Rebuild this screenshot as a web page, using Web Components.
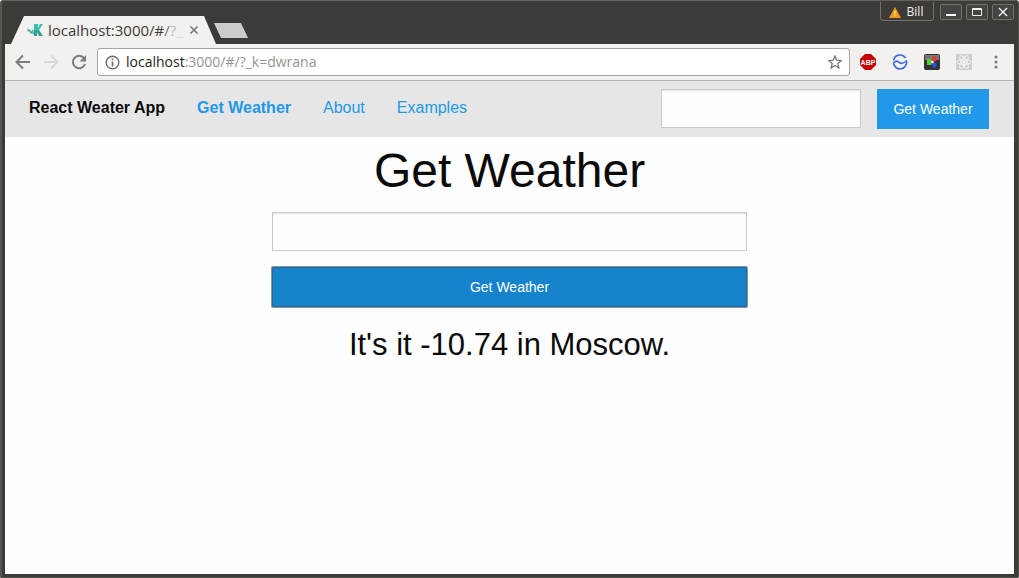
<!DOCTYPE html>
<html lang="en">
<head>
<meta charset="utf-8">
<title>React Weater App</title>
<style>
html, body { margin: 0; height: 100%; background: #fff; }
</style>
</head>
<body>
<desktop-window></desktop-window>
<script>
function define(name, html) {
  const template = document.createElement('template');
  template.innerHTML = html;
  customElements.define(name, class extends HTMLElement {
    constructor() {
      super();
      this.attachShadow({ mode: 'open' }).append(template.content.cloneNode(true));
    }
  });
}

define('title-bar', `
<style>
:host { display: flex; height: 44px; justify-content: space-between; align-items: flex-end; color: #3c3b37; }
* { box-sizing: border-box; }
.tabs { display: flex; align-items: flex-end; padding-left: 6px; }
.tab { display: flex; align-items: center; width: 205px; height: 28px; padding: 0 16px; gap: 4px; background: #f2f1f0; clip-path: polygon(0 100%, 13px 0, calc(100% - 12px) 0, 100% 100%); }
.label { flex: 1; overflow: hidden; white-space: nowrap; font: 15px/20px "Open Sans", "Noto Sans", sans-serif; }
.a { color: #777; } .b { color: #bbb; } .c { color: #ddd; }
button { border: 0; padding: 0; margin: 0; background: none; display: grid; place-items: center; color: inherit; }
.close { width: 12px; height: 12px; }
.new { width: 34px; height: 15px; margin: 0 0 6px -2px; background: #cdccca; clip-path: polygon(0 0, 27px 0, 100% 100%, 7px 100%); }
.controls { display: flex; align-self: flex-start; gap: 4px; padding-top: 4px; color: #f4f4f0; }
.controls button { width: 22px; height: 16px; border: 1px solid #72706a; border-radius: 2px; background: #454440; }
.controls .user { display: flex; align-items: center; justify-content: center; gap: 6px; width: 54px; height: 19px; margin: -2px 2px 0 0; padding: 2px 2px 0 0; border-top: 0; border-radius: 0 0 4px 4px; background: #3c3b37; font: 500 12px/16px "Open Sans", "Noto Sans", sans-serif; }
</style>
<div class="tabs">
  <div class="tab">
    <svg width="17" height="14" viewBox="0 0 17 14"><path d="M0 5l2 2 1-1 1 3 2-3 1 6-2-2-1 1-2-3-1 1z" fill="#35aa9e"/><path d="M7 1h4v4l2-4h3l-4 6h-5z" fill="#36c4b0"/><path d="M7 7h5l4 6h-4l-2-4v4H7z" fill="#2fa294"/></svg>
    <span class="label">localhost:3000/#<span class="a">/</span><span class="b">?</span><span class="c">_</span></span>
    <button class="close" aria-label="Close tab"><svg width="10" height="10"><path d="M1.5 1.5l7 7m0-7l-7 7" stroke="#777" stroke-width="1.6"/></svg></button>
  </div>
  <button class="new" aria-label="New tab"></button>
</div>
<div class="controls">
  <button class="user"><svg width="12" height="11"><path d="M6 0l6 11H0z" fill="#f29a1b"/><path d="M6 4v3m0 1v1" stroke="#fff3d0"/></svg>Bill</button>
  <button aria-label="Minimize"><svg width="12" height="10"><path d="M1 8h10" stroke="#fff" stroke-width="2"/></svg></button>
  <button aria-label="Maximize"><svg width="12" height="10"><path d="M1.500 1.500h9v7h-9zM1 2.500h10" fill="none" stroke="#eee"/></svg></button>
  <button aria-label="Close"><svg width="12" height="10"><path d="M2 1l8 8m0-8l-8 8" stroke="#fff" stroke-width="1.3"/></svg></button>
</div>
`);

define('browser-toolbar', `
<style>
:host { display: flex; box-sizing: border-box; height: 37px; align-items: center; padding: 0 10px; background: #f2f1f0; border-bottom: 1px solid #b6b4b6; }
* { box-sizing: border-box; }
button { flex: none; border: 0; padding: 0; margin: 0; background: none; display: grid; place-items: center; }
.nav { display: flex; gap: 12px; margin-right: 10px; }
.nav button { width: 16px; height: 16px; }
.address { flex: 1; display: flex; align-items: center; height: 28px; padding: 0 7px; gap: 6px; background: #fff; border: 1px solid #a6a5a5; border-radius: 3px; }
.url { flex: 1; font: 14px/20px "Open Sans", "Noto Sans", sans-serif; color: #949494; white-space: nowrap; }
b { font-weight: 400; color: #222; }
.ext { display: flex; gap: 16px; margin-left: 10px; }
.ext button { width: 16px; height: 16px; }
.abp { font: bold 7px/8px "Liberation Sans", sans-serif; }
</style>
<div class="nav">
  <button aria-label="Back"><svg width="16" height="16"><path d="M15 8H2M8 1.500L1.500 8 8 14.500" fill="none" stroke="#7d7c7c" stroke-width="2"/></svg></button>
  <button aria-label="Forward"><svg width="16" height="16"><path d="M1 8h13M8 1.500L14.500 8 8 14.500" fill="none" stroke="#d9d8d7" stroke-width="2"/></svg></button>
  <button aria-label="Reload"><svg width="16" height="16"><path d="M13 4.200A6.200 6.200 0 1 0 14 10" fill="none" stroke="#7d7c7c" stroke-width="2"/><path d="M15 1v6.500H8.500z" fill="#7d7c7c"/></svg></button>
</div>
<div class="address">
  <svg width="15" height="15"><circle cx="7.500" cy="7.500" r="6.300" fill="none" stroke="#6e6e6e" stroke-width="1.400"/><path d="M7.500 3.500v1.700M7.500 6.500v5" stroke="#6e6e6e" stroke-width="1.700"/></svg>
  <span class="url"><b>localhost</b>:3000/#/?_k=dwrana</span>
  <button aria-label="Bookmark"><svg width="14" height="14"><path d="M7 1l1.700 4.200 4.600.300-3.500 3 1.100 4.400L7 10.400l-3.900 2.500 1.100-4.400-3.500-3 4.600-.300z" fill="none" stroke="#777" stroke-width="1.300"/></svg></button>
</div>
<div class="ext">
  <button aria-label="Adblock Plus"><svg width="16" height="16"><path d="M5 0h6l5 5v6l-5 5H5l-5-5V5z" fill="#c80000"/><text class="abp" x="8" y="10.500" text-anchor="middle" fill="#fff">ABP</text></svg></button>
  <button aria-label="Wave extension"><svg width="16" height="16"><path d="M1.600 6.500A6.500 6.500 0 0 1 13.500 4M1 9.500C4 6 5.500 7 7.500 8.700S11.500 9.500 15 6.500M1.500 9.500a6.500 6.500 0 0 0 13-2.500" fill="none" stroke="#3e6be0" stroke-width="1.600"/></svg></button>
  <button aria-label="Color extension"><svg width="16" height="16"><rect width="16" height="16" rx="2" fill="#333"/><path d="M1 1h14v5H1z" fill="#777"/><path d="M3 5h4l2 3-2 3H3z" fill="#56cf32"/><path d="M8 3l4-1 1 4-3 2-2-2z" fill="#f03434"/><path d="M8 9l3-1 2 3-2 3-3-2z" fill="#2351e8"/><circle cx="8.500" cy="8" r="1.200" fill="#fff"/></svg></button>
  <button aria-label="React tools"><svg width="16" height="16"><path d="M0 0h16v16H0z" fill="#cecece"/><g fill="none" stroke="#f3f3f3"><ellipse cx="8" cy="8" rx="7" ry="2.700"/><ellipse cx="8" cy="8" rx="7" ry="2.700" transform="rotate(60 8 8)"/><ellipse cx="8" cy="8" rx="7" ry="2.700" transform="rotate(120 8 8)"/></g><circle cx="8" cy="8" r="1.500" fill="#fff"/></svg></button>
  <button aria-label="Menu"><svg width="16" height="16" fill="#808080"><circle cx="8" cy="3" r="1.600"/><circle cx="8" cy="8" r="1.600"/><circle cx="8" cy="13" r="1.600"/></svg></button>
</div>
`);

define('site-nav', `
<style>
:host { display: flex; box-sizing: border-box; height: 56px; justify-content: space-between; align-items: flex-start; padding: 8px 25px 8px 24px; background: #e6e6e6; font: 16px/22px "Liberation Sans", Arial, sans-serif; }
* { box-sizing: border-box; }
nav { display: flex; gap: 32px; padding-top: 8px; color: #0a0a0a; white-space: nowrap; }
a { color: #2199e8; text-decoration: none; }
.active, b { font-weight: bold; }
form { display: flex; gap: 16px; margin: 0; }
input { width: 200px; height: 39px; margin: 0; padding: 8px; border: 1px solid #cacaca; border-radius: 0; background: #fefefe; box-shadow: inset 0 1px 2px rgba(10,10,10,.1); font: inherit; outline: 0; }
button { width: 112px; height: 40px; padding: 0; border: 0; background: #2199e8; color: #fefefe; font: 14px/16px "Liberation Sans", Arial, sans-serif; }
</style>
<nav><b>React Weater App</b><a class="active" href="#/">Get Weather</a><a href="#/about">About</a><a href="#/examples">Examples</a></nav>
<form onsubmit="return false"><input type="search" aria-label="Search weather"><button>Get Weather</button></form>
`);

define('weather-page', `
<style>
:host { display: block; box-sizing: border-box; width: 50%; margin: 0 auto; padding: 0 15px; text-align: center; color: #0a0a0a; font-family: "Liberation Sans", Arial, sans-serif; }
* { box-sizing: border-box; }
h1 { margin: 0 0 8px; font-weight: 400; font-size: 48px; line-height: 67px; }
form { display: grid; gap: 16px; margin: 0; }
input { width: 100%; height: 39px; margin: 0; padding: 8px; border: 1px solid #cacaca; border-radius: 0; background: #fefefe; box-shadow: inset 0 1px 2px rgba(10,10,10,.1); font-size: 16px; outline: 0; }
button { width: 100%; height: 40px; padding: 0; border: 1px solid #2f6488; border-radius: 1px; box-shadow: 0 0 0 1px #8298a8; background: #1583cc; color: #fefefe; font: 14px/16px "Liberation Sans", Arial, sans-serif; }
h3 { margin: 16px 0 0; font-weight: 400; font-size: 31px; line-height: 43px; white-space: nowrap; }
</style>
<h1>Get Weather</h1>
<form onsubmit="return false"><input type="search" aria-label="City"><button>Get Weather</button></form>
<h3>It's it -10.74 in Moscow.</h3>
`);

define('desktop-window', `
<style>
:host { display: flex; flex-direction: column; box-sizing: border-box; min-height: 100vh; padding: 0 5px 4px; background: #3c3b37; border-radius: 4px 4px 2px 2px; box-shadow: inset 0 1px #62615d, inset 2px 0 #55544f, inset -1px -1px #55544f; }
main { flex: 1; background: #fefefe; }
</style>
<title-bar></title-bar>
<browser-toolbar></browser-toolbar>
<main><site-nav></site-nav><weather-page></weather-page></main>
`);
</script>
</body>
</html>
